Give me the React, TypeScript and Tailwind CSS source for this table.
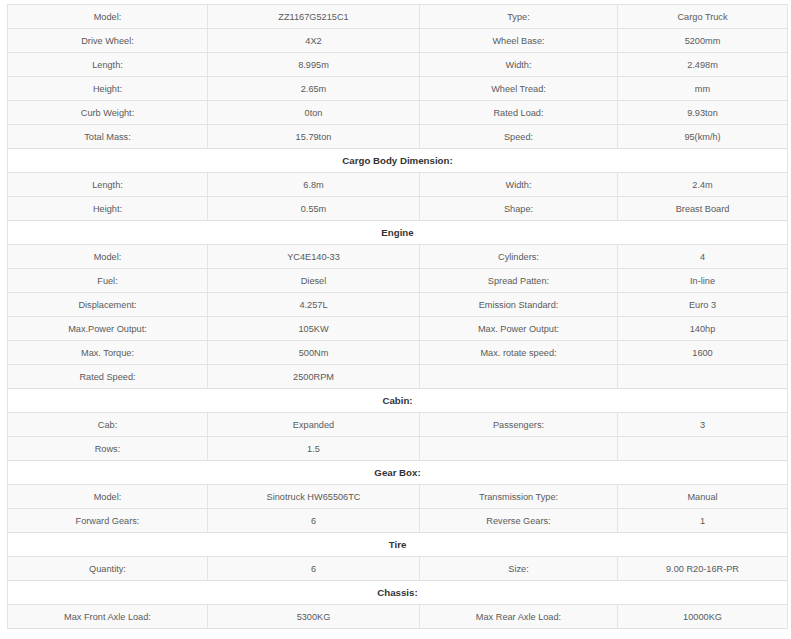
import React from "react";

type Row = { h: string } | { c: [string, string, string, string] };

const rows: Row[] = [
  { c: ["Model:", "ZZ1167G5215C1", "Type:", "Cargo Truck"] },
  { c: ["Drive Wheel:", "4X2", "Wheel Base:", "5200mm"] },
  { c: ["Length:", "8.995m", "Width:", "2.498m"] },
  { c: ["Height:", "2.65m", "Wheel Tread:", "mm"] },
  { c: ["Curb Weight:", "0ton", "Rated Load:", "9.93ton"] },
  { c: ["Total Mass:", "15.79ton", "Speed:", "95(km/h)"] },
  { h: "Cargo Body Dimension:" },
  { c: ["Length:", "6.8m", "Width:", "2.4m"] },
  { c: ["Height:", "0.55m", "Shape:", "Breast Board"] },
  { h: "Engine" },
  { c: ["Model:", "YC4E140-33", "Cylinders:", "4"] },
  { c: ["Fuel:", "Diesel", "Spread Patten:", "In-line"] },
  { c: ["Displacement:", "4.257L", "Emission Standard:", "Euro 3"] },
  { c: ["Max.Power Output:", "105KW", "Max. Power Output:", "140hp"] },
  { c: ["Max. Torque:", "500Nm", "Max. rotate speed:", "1600"] },
  { c: ["Rated Speed:", "2500RPM", "", ""] },
  { h: "Cabin:" },
  { c: ["Cab:", "Expanded", "Passengers:", "3"] },
  { c: ["Rows:", "1.5", "", ""] },
  { h: "Gear Box:" },
  { c: ["Model:", "Sinotruck HW65506TC", "Transmission Type:", "Manual"] },
  { c: ["Forward Gears:", "6", "Reverse Gears:", "1"] },
  { h: "Tire" },
  { c: ["Quantity:", "6", "Size:", "9.00 R20-16R-PR"] },
  { h: "Chassis:" },
  { c: ["Max Front Axle Load:", "5300KG", "Max Rear Axle Load:", "10000KG"] },
];

export default function App() {
  return (
    <div className="w-[791px] h-[639px] bg-white pt-[4px] pl-[7px]" style={{ fontFamily: '"Liberation Sans", Arial, sans-serif' }}>
      <table className="border-collapse table-fixed w-[781px] border border-[#e3e3e3]">
        <colgroup>
          <col className="w-[200px]" />
          <col className="w-[212px]" />
          <col className="w-[198px]" />
          <col className="w-[170px]" />
        </colgroup>
        <tbody>
          {rows.map((r, i) =>
            "h" in r ? (
              <tr key={i} className="h-[24px] bg-white">
                <td colSpan={4} className="border border-[#e3e3e3] text-center text-[9.7px] font-bold text-[#333] px-0 pt-[1px] pb-0 leading-none">
                  {r.h}
                </td>
              </tr>
            ) : (
              <tr key={i} className="h-[24px] bg-[#f9f9f9]">
                {r.c.map((t, j) => (
                  <td key={j} className="border border-[#e3e3e3] text-center text-[9.2px] text-[#5a5a5a] px-0 pt-[2px] pb-0 leading-none">
                    {t}
                  </td>
                ))}
              </tr>
            )
          )}
        </tbody>
      </table>
    </div>
  );
}
